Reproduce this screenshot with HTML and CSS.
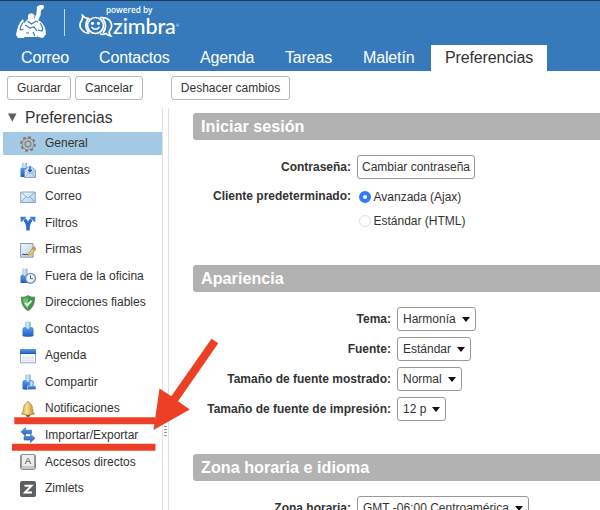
FILE: index.html
```
<!DOCTYPE html>
<html lang="es">
<head>
<meta charset="utf-8">
<title>Zimbra: Preferencias</title>
<link rel="stylesheet" href="styles.css">
</head>
<body>
<svg width="0" height="0" class="defs" aria-hidden="true">
  <defs>
    <linearGradient id="blue" x1="0" y1="0" x2="0" y2="1"><stop offset="0" stop-color="#5a9df0"/><stop offset="1" stop-color="#1c5cc0"/></linearGradient>
    <linearGradient id="pale" x1="0" y1="0" x2="1" y2="1"><stop offset="0" stop-color="#f1f8ff"/><stop offset="1" stop-color="#b4cdec"/></linearGradient>
    <linearGradient id="gold" x1="0" y1="0" x2="1" y2="0"><stop offset="0" stop-color="#d9a030"/><stop offset=".4" stop-color="#fbe28a"/><stop offset="1" stop-color="#bd8420"/></linearGradient>
    <linearGradient id="head" x1="0" y1="0" x2="1" y2="0"><stop offset="0" stop-color="#9cc3e6"/><stop offset=".45" stop-color="#d3e7f8"/><stop offset="1" stop-color="#7eacd8"/></linearGradient>
    <g id="person">
      <path d="M2.800 15V8.500Q2.800 6.300 5 6.300h6q2.200 0 2.200 2.200V15Q8 16.300 2.800 15z" fill="url(#blue)" stroke="#2f6cc4" stroke-width=".5"/>
      <path d="M5.200 1.500Q5.200.3 8 .3t2.800 1.200v4.300L8 8.300 5.200 5.800z" fill="url(#head)"/>
    </g>
  </defs>
</svg>
<div class="app">
  <header class="banner">
    <div class="brand">
      <svg class="emblem" width="32" height="36" viewBox="0 0 32 36">
        <g fill="#fff">
          <path d="M22 3.500l3-1.500h3.500l.5 3-3 2.500-.5 5-3 6-3.500-2 2.500-6z"/>
          <path d="M13 12q3-3.500 6.500 0l-.3 4 3.800 4 3 8-4 6H10l-3-5 1-8 5-5z"/>
          <path d="M8 16q-5 4-7 16l2 3h6l3-5z"/><path d="M23 17q6 3 7.500 10l.5 4-3 4-5-1z"/>
        </g>
        <path d="M12.500 18l4 3 5-3M10 22l5 3 4-1 3 4M8.500 19q-4 5-3 8l3-1M25 20q4 5 2 8l-4-1M11 30h3M18 29l2 4" fill="none" stroke="#367abc" stroke-width="1.200"/>
      </svg>
      <span class="divider"></span>
      <svg class="bubbles" width="34" height="24" viewBox="0 0 34 24" fill="none" stroke="#fff" stroke-width="1.700">
        <path d="M10.500 4.500Q6 4.800 3.500 1.500 4 5 2 7.500-.5 12 3 16t7.500 3"/>
        <path d="M9 5Q4.500 11.500 9.500 18.500M24 5q5 6.500 0 14"/>
        <path d="M21 3.700Q28 3 31 7q3.500 5-.5 10-1 2 1.200 5-2.700-.3-4.700-2.500-3 1.300-6 .5"/>
        <circle cx="16.500" cy="11.500" r="8"/>
        <circle cx="13.500" cy="9.300" r=".8" fill="#fff"/><circle cx="19.500" cy="9.300" r=".8" fill="#fff"/>
        <path d="M12.500 13q4 4.500 8 0" stroke-width="1.500"/>
      </svg>
      <div class="wordmark"><span class="powered">powered by</span><span class="zimbra">zimbra<i>®</i></span></div>
    </div>
    <nav class="tabs">
      <a class="t-correo">Correo</a><a class="t-contactos">Contactos</a><a class="t-agenda">Agenda</a><a class="t-tareas">Tareas</a><a class="t-maletin">Maletín</a><a class="active">Preferencias</a>
    </nav>
  </header>
  <div class="toolbar">
    <button class="btn b-save">Guardar</button>
    <button class="btn b-cancel">Cancelar</button>
    <button class="btn b-undo">Deshacer cambios</button>
  </div>
  <div class="columns">
    <aside class="sidebar">
      <h2><svg width="9" height="9" viewBox="0 0 9 9"><path d="M0 .5h8.500L4.300 8.700z" fill="#606060"/></svg>Preferencias</h2>
      <ul>
        <li class="selected"><svg viewBox="0 0 16 16"><circle cx="8" cy="8" r="6.700" fill="none" stroke="#777" stroke-width="2.200" stroke-dasharray="2.700 2.560"/><circle cx="8" cy="8" r="4.500" fill="none" stroke="#808080" stroke-width="3.400"/><circle cx="8" cy="8" r="4.500" fill="none" stroke="#b9bcbe" stroke-width="2"/><circle cx="8" cy="8" r="2.600" fill="#a5c9e4" stroke="#777" stroke-width=".8"/></svg>General</li>
        <li><svg viewBox="0 0 16 16"><path d="M.5 15V7L2 5h6v10z" fill="url(#blue)"/><path d="M2 .8h5V6H2z" fill="url(#head)"/><path d="M4.500 8L10 4l5.500 4v7.500h-11z" fill="url(#pale)" stroke="#7194bd" stroke-width=".8"/><path d="M4.500 8.500L10 12l5.500-3.500M4.500 15.500L8.500 11M15.500 15.500L11.500 11" fill="none" stroke="#8eabcf" stroke-width=".7"/><path d="M10 4.500v5M8 7.700l2 2 2-2" fill="none" stroke="#1d64cf" stroke-width="1.500"/></svg>Cuentas</li>
        <li><svg viewBox="0 0 16 16"><path d="M.7 3h14.600v10.500H.7z" fill="url(#pale)" stroke="#7e9dc4" stroke-width=".9"/><path d="M1 3.300L8 9l7-5.700M1 13.300l5-5.500M15 13.300L10 7.800" fill="none" stroke="#7c9bc5" stroke-width=".8"/></svg>Correo</li>
        <li><svg viewBox="0 0 16 16"><path d="M4.300 4.600Q8 6.800 8 15.500 8 6.800 11.700 4.600" fill="none" stroke="#2f6fca" stroke-width="3.400"/><path d="M.4 1.700h6.200L.9 7.600zM15.600 1.700H9.400l5.700 5.900z" fill="#3b7cd6"/></svg>Filtros</li>
        <li><svg viewBox="0 0 16 16"><path d="M.6 1.500h12.500v13.700H.6z" fill="url(#pale)" stroke="#8191a7" stroke-width=".9"/><path d="M2 13l2-1 1 1 2-1 1 1" fill="none" stroke="#333" stroke-width=".9"/><path d="M8.500 13.500l1-3.700 3.500-4 2.300 2-3.500 4.200z" fill="#f5c84c" stroke="#b58c35" stroke-width=".6"/><path d="M12.300 6.500L14 4.500l2 2-1.700 1.900z" fill="#df8d73" stroke="#9c5b46" stroke-width=".5"/></svg>Firmas</li>
        <li><svg viewBox="0 0 16 16"><path d="M.5 15V8L2 6.500h7V15z" fill="url(#blue)"/><path d="M2.500.5h5v5.300L5 8.200 2.500 5.800z" fill="url(#head)"/><circle cx="10.500" cy="10.300" r="4.900" fill="#edf3f9" stroke="#7692b3" stroke-width="1.400"/><path d="M10.500 7.200v3.500h2.500" fill="none" stroke="#456486"/></svg>Fuera de la oficina</li>
        <li><svg viewBox="0 0 16 16"><path d="M8 .7q3 2 6.300 1.700.6 8.700-6.300 13Q1.100 11.100 1.700 2.400 5 2.700 8 .7z" fill="#2ba43a" stroke="#737b77" stroke-width="1.300"/><path d="M8 2.200v12Q2.800 10 3 3.600q3 0 5-1.400z" fill="#63c463"/><path d="M5 7.800l2.400 2.500 4-4.700" fill="none" stroke="#fff" stroke-width="1.900"/></svg>Direcciones fiables</li>
        <li><svg viewBox="0 0 16 16"><use href="#person"/></svg>Contactos</li>
        <li><svg viewBox="0 0 16 16"><path d="M.5 1.500h15v13.300H.5z" fill="#fff" stroke="#91a9c7"/><path d="M0 1h16v5H0z" fill="url(#blue)"/><path d="M2 8.500h12v4.800H2z" fill="#d3e0f0"/><path d="M5 8.500v5M8 8.500v5M11 8.500v5M2 11h12" stroke="#fff" stroke-width=".8"/></svg>Agenda</li>
        <li><svg viewBox="0 0 16 16"><use href="#person"/><path d="M7.500 15.500V13q0-1.500 2-1.500h4.500q2 0 2 1.500v2.500z" fill="url(#blue)" stroke="#d1e4f5" stroke-width=".7"/><path d="M9.700 7h3.600v4l-1.800 1.700L9.700 11z" fill="url(#head)" stroke="#6b9bcf" stroke-width=".5"/></svg>Compartir</li>
        <li><svg viewBox="0 0 16 16"><path d="M6.500 13.500h3l1 1.500-2.500 1-2.500-1z" fill="#5c4c30"/><path d="M6.700 2q0-1.500 1.300-1.500T9.300 2q3.200 1 3.200 5.500 0 4 2 5.500-6.500 2.200-13 0 2-1.500 2-5.500Q3.500 3 6.700 2z" fill="url(#gold)" stroke="#a78544" stroke-width=".7"/></svg>Notificaciones</li>
        <li><svg viewBox="0 0 16 16"><path d="M1 4.800L5.500.8v2.400h6v3.600h-6v2.400z" fill="url(#blue)" stroke="#3268ad" stroke-width=".6"/><path d="M15 11.200l-4.500-4v2.300H4v3.600h6.500v2.500z" fill="url(#blue)" stroke="#3268ad" stroke-width=".6"/></svg>Importar/Exportar</li>
        <li><svg viewBox="0 0 16 16"><rect x=".5" y=".5" width="15" height="15" rx="2" fill="#999" stroke="#8d8d8d"/><path d="M2 1h12v11H2z" fill="#ededed"/><path d="M1 15l1.500-3h11l1.500 3z" fill="#c8c8c8"/><text class="key-letter" x="8" y="10">A</text></svg>Accesos directos</li>
        <li><svg viewBox="0 0 16 16"><rect width="16" height="16" rx="2" fill="#5d5f61"/><path d="M4.500 4.700h7L5 11.500h7" fill="none" stroke="#fff" stroke-width="2"/></svg>Zimlets</li>
      </ul>
    </aside>
    <div class="splitter"><i></i><i></i><i></i><i></i></div>
    <main class="content">
      <section class="login">
        <h3>Iniciar sesión</h3>
        <div class="form narrow">
          <label class="l-pass">Contraseña:</label><div><button class="btn b-pass">Cambiar contraseña</button></div>
          <label class="l-client">Cliente predeterminado:</label>
          <div class="radios"><span><i class="radio on"></i>Avanzada (Ajax)</span><span><i class="radio"></i>Estándar (HTML)</span></div>
        </div>
      </section>
      <section class="look">
        <h3>Apariencia</h3>
        <div class="form wide">
          <label class="l-tema">Tema:</label><div class="select s-tema">Harmonía</div>
          <label class="l-fuente">Fuente:</label><div class="select s-fuente">Estándar</div>
          <label class="l-shown">Tamaño de fuente mostrado:</label><div class="select s-shown">Normal</div>
          <label class="l-print">Tamaño de fuente de impresión:</label><div class="select s-print">12 p</div>
        </div>
      </section>
      <section class="zone">
        <h3>Zona horaria e idioma</h3>
        <div class="form narrow">
          <label class="l-zone">Zona horaria:</label><div class="select s-zone">GMT -06:00 Centroamérica</div>
        </div>
      </section>
    </main>
  </div>
  <svg class="annotation" width="600" height="510" viewBox="0 0 600 510" fill="#eb4025">
    <path d="M14.300 417.300H155v7H14.300zM12 443.800h143.500v7H12z"/>
    <path d="M211.500 338.800l6.800 4.400-40.300 58 11.800 8.300-36.300 20.500 6-41.500 11.800 7.700z"/>
  </svg>
</div>
</body>
</html>
```
FILE: styles.css
```
* { box-sizing: border-box; }
body { margin: 0; font: 12px/16px "Liberation Sans", Arial, sans-serif; color: #333; background: #fff; }
.defs { position: absolute; }
.app { position: relative; width: 600px; height: 510px; overflow: hidden; display: flex; flex-direction: column; }

.banner { height: 71px; flex: none; background: #367abc; border-top: 1px solid #20395a; display: flex; flex-direction: column; justify-content: space-between; }
.brand { display: flex; height: 40px; padding-left: 15px; }
.emblem { margin-top: 2px; }
.divider { width: 1px; height: 27px; margin: 8px 14px 0 17px; background: #c4d8eb; }
.bubbles { margin-top: 13px; }
.wordmark { display: flex; flex-direction: column; color: #fff; }
.powered { font: 600 8.200px/10px "Open Sans", sans-serif; margin: 4px 0 0 -7px; }
.zimbra { font: 500 21.500px/20px Lato, sans-serif; margin: 1px 0 0 0; letter-spacing: -.1px; white-space: nowrap; }
.zimbra i { font: 4px Lato, sans-serif; vertical-align: 7px; }

.tabs { display: flex; height: 26px; padding-left: 21px; font-size: 16px; letter-spacing: -.15px; line-height: 25px; color: #fff; }
.tabs a { flex: none; white-space: nowrap; }
.t-correo { width: 78px; }
.t-contactos { width: 101px; }
.t-agenda { width: 85px; }
.t-tareas { width: 78px; }
.t-maletin { width: 68px; }
.tabs .active { width: 116px; background: #fff; color: #333; text-align: center; }

.toolbar { flex: none; display: flex; height: 37px; padding: 5px 7px 0; }
.btn { font: 12px/14px "Liberation Sans", Arial, sans-serif; color: #333; background: #fff; border: 1px solid #b8b8b8; border-radius: 3px; height: 24px; padding: 0; white-space: nowrap; }
.b-save { width: 64px; }
.b-cancel { width: 68px; margin-left: 4px; }
.b-undo { width: 119px; margin-left: 28px; }

.columns { flex: 1; display: flex; min-height: 0; }
.sidebar { width: 162px; flex: none; padding-left: 3px; }
.sidebar h2 { margin: 0; height: 23.500px; padding-left: 5px; display: flex; align-items: center; font-size: 15.600px; font-weight: 400; line-height: 19px; padding-bottom: 5px; }
.sidebar h2 svg { margin-right: 8px; }
.sidebar ul { list-style: none; margin: 0; padding: 0; display: grid; grid-auto-rows: 23.300px; row-gap: 3.240px; }
.sidebar li { display: flex; align-items: center; padding-left: 17px; white-space: nowrap; }
.sidebar li svg { width: 16px; height: 16px; margin: 1px 9px 0 0; flex: none; }
.selected { background: #a4c9e4; }
.key-letter { font: 9.500px "Liberation Sans", sans-serif; text-anchor: middle; fill: #444; }
.splitter { width: 7px; flex: none; border: 1px solid #e0e0e0; border-width: 0 1px; padding: 318px 1px 0; display: flex; flex-direction: column; gap: 2px; }
.splitter i { height: 1px; background: #999; flex: none; }

.content { flex: 1; min-width: 0; padding: 5px 0 0 24px; }
.content h3 { margin: 0; height: 26.600px; padding-left: 8px; background: #b2b2b2; color: #fff; border-radius: 3px 0 0 3px; font-size: 16.200px; line-height: 27px; }
.form { display: grid; font-size: 12px; }
.form label { font-weight: 700; text-align: right; line-height: 24px; white-space: nowrap; }
.narrow { grid-template-columns: 159px 1fr; column-gap: 5px; }
.wide { grid-template-columns: 198px 1fr; column-gap: 6px; grid-auto-rows: 24px; row-gap: 6px; }
.login { height: 152.400px; }
.login .form { padding-top: 15px; }
.form.narrow label { padding-right: 1px; }
.btn.b-pass { width: 118px; display: block; border-color: #999; }
.radios { display: grid; grid-auto-rows: 24px; padding: 6px 0 0 1.500px; }
.l-client { padding-top: 5px; }
.radios span { display: flex; align-items: center; white-space: nowrap; }
.radio { width: 12px; height: 12px; border: 1px solid #ddd; border-radius: 50%; margin-right: 3px; }
.radio.on { border: 4px solid #307cf6; }
.look { height: 189px; }
.look .form { padding-top: 15px; }
.select { height: 24px; border: 1px solid #999; border-radius: 3px; background: #fff; display: flex; align-items: center; justify-content: space-between; padding: 0 5px; white-space: nowrap; }
.select::after { content: ""; margin-top: 1px; border: 4px solid transparent; border-top: 5px solid #111; border-bottom: 0; }
.s-tema { width: 79px; }
.s-fuente { width: 74px; }
.s-shown { width: 65px; }
.s-print { width: 49px; }
.s-zone { width: 172px; }
.zone .form { padding-top: 15px; }
.annotation { position: absolute; left: 0; top: 0; }
```
